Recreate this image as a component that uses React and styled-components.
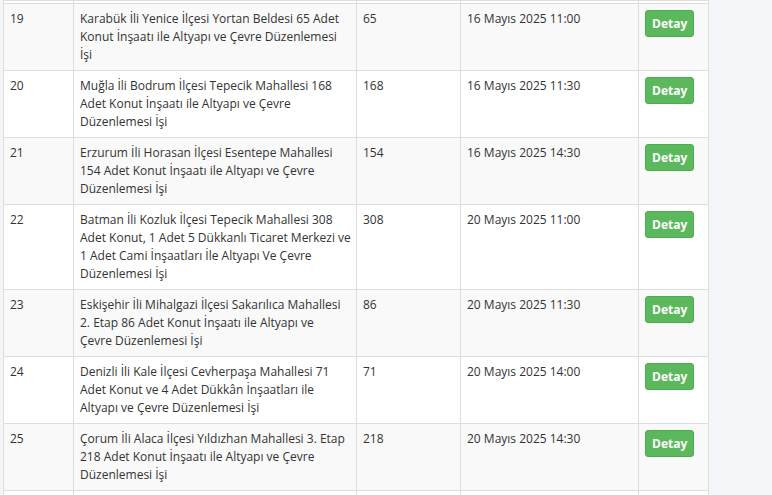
import React from "react";
import styled, { createGlobalStyle } from "styled-components";

const GlobalStyle = createGlobalStyle`
  html, body {
    margin: 0;
    padding: 0;
    background: #f4f5f9;
    overflow: hidden;
  }
  body {
    font-family: "Open Sans", Lato, "Liberation Sans", sans-serif;
    color: #333;
  }
`;

const Page = styled.div`
  padding-left: 3px;
  width: 705px;
`;

const Table = styled.table`
  width: 705px;
  border-collapse: collapse;
  table-layout: fixed;
  background: #fff;
  border: 1px solid #ddd;
  border-top: none;
  font-size: 12px;
  line-height: 18px;
`;

const Row = styled.tr`
  background: ${(p) => (p.$striped ? "#f9f9f9" : "#fff")};
`;

const Cell = styled.td`
  border: 1px solid #ddd;
  padding: 6px 4px 6px 6px;
  vertical-align: top;
  text-align: left;
  word-wrap: break-word;
`;

const EdgeCell = styled.td`
  border: 1px solid #ddd;
  padding: 0;
  height: ${(p) => p.$h}px;
`;

const DetailButton = styled.button`
  display: inline-block;
  font-family: inherit;
  font-size: 12px;
  font-weight: 700;
  line-height: 17px;
  color: #fff;
  background: #5cb85c;
  border: 1px solid #4cae4c;
  border-radius: 3px;
  padding: 4px 6px;
  cursor: pointer;
`;

const rows = [
  [19, "Karabük İli Yenice İlçesi Yortan Beldesi 65 Adet Konut İnşaatı ile Altyapı ve Çevre Düzenlemesi İşi", 65, "16 Mayıs 2025 11:00"],
  [20, "Muğla İli Bodrum İlçesi Tepecik Mahallesi 168 Adet Konut İnşaatı ile Altyapı ve Çevre Düzenlemesi İşi", 168, "16 Mayıs 2025 11:30"],
  [21, "Erzurum İli Horasan İlçesi Esentepe Mahallesi 154 Adet Konut İnşaatı ile Altyapı ve Çevre Düzenlemesi İşi", 154, "16 Mayıs 2025 14:30"],
  [22, "Batman İli Kozluk İlçesi Tepecik Mahallesi 308 Adet Konut, 1 Adet 5 Dükkanlı Ticaret Merkezi ve 1 Adet Cami İnşaatları İle Altyapı Ve Çevre Düzenlemesi İşi", 308, "20 Mayıs 2025 11:00"],
  [23, "Eskişehir İli Mihalgazi İlçesi Sakarılıca Mahallesi 2. Etap 86 Adet Konut İnşaatı ile Altyapı ve Çevre\u00a0Düzenlemesi İşi", 86, "20 Mayıs 2025 11:30"],
  [24, "Denizli İli Kale İlçesi Cevherpaşa Mahallesi 71 Adet Konut ve 4 Adet Dükkân İnşaatları ile Altyapı ve Çevre Düzenlemesi İşi", 71, "20 Mayıs 2025 14:00"],
  [25, "Çorum İli Alaca İlçesi Yıldızhan Mahallesi 3. Etap 218 Adet Konut İnşaatı ile Altyapı ve Çevre Düzenlemesi İşi", 218, "20 Mayıs 2025 14:30"],
];

function EdgeRow({ h }) {
  return (
    <Row>
      {[0, 1, 2, 3, 4].map((k) => (
        <EdgeCell key={k} $h={h} />
      ))}
    </Row>
  );
}

export default function App() {
  return (
    <Page>
      <GlobalStyle />
      <Table>
        <colgroup>
          <col style={{ width: 70 }} />
          <col style={{ width: 283 }} />
          <col style={{ width: 104 }} />
          <col style={{ width: 178 }} />
          <col style={{ width: 70 }} />
        </colgroup>
        <tbody>
          <EdgeRow h={2} />
          {rows.map(([no, name, count, date], i) => (
            <Row key={no} $striped={i % 2 === 0}>
              <Cell>{no}</Cell>
              <Cell>{name}</Cell>
              <Cell>{count}</Cell>
              <Cell>{date}</Cell>
              <Cell>
                <DetailButton type="button">Detay</DetailButton>
              </Cell>
            </Row>
          ))}
          <EdgeRow h={8} />
        </tbody>
      </Table>
    </Page>
  );
}
